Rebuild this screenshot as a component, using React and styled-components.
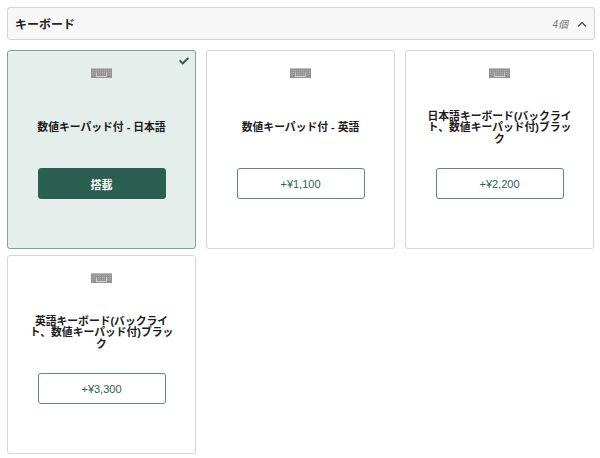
import React from 'react';
import styled, { createGlobalStyle } from 'styled-components';
import { FaCheck } from 'react-icons/fa';

const GlobalStyle = createGlobalStyle`
  html, body {
    margin: 0;
    background: #fff;
    font-family: "Liberation Sans", "Noto Sans CJK JP", sans-serif;
  }
`;

const Page = styled.div`
  width: 600px;
  height: 458px;
  box-sizing: border-box;
  padding: 7px 5px 0 7px;
  overflow: hidden;
`;

const Header = styled.div`
  height: 33px;
  box-sizing: border-box;
  display: flex;
  align-items: center;
  justify-content: space-between;
  padding: 0 6px 0 7px;
  background: #f7f7f7;
  border: 1px solid #d4d4d4;
  border-radius: 3px;
`;

const Title = styled.div`
  font-size: 12px;
  font-weight: 700;
  color: #222;
`;

const Summary = styled.div`
  display: flex;
  align-items: center;
  gap: 8px;
`;

const Count = styled.span`
  font-size: 10px;
  font-style: italic;
  color: #777;
`;

const Grid = styled.div`
  display: grid;
  grid-template-columns: repeat(3, 189px);
  grid-auto-rows: 199px;
  column-gap: 10px;
  row-gap: 6px;
  margin-top: 10px;
`;

const Card = styled.div`
  position: relative;
  box-sizing: border-box;
  display: flex;
  flex-direction: column;
  align-items: center;
  padding-top: 17px;
  border: 1px solid ${(p) => (p.$selected ? '#7fa398' : '#d6d6d6')};
  border-radius: 3px;
  background: ${(p) => (p.$selected ? '#e4eeea' : '#fff')};
`;

const Tick = styled.div`
  position: absolute;
  top: 5px;
  right: 6px;
  display: flex;
  color: #2b5f4f;
  font-size: 10px;
`;

const Name = styled.div`
  height: 36px;
  width: 150px;
  margin-top: 32px;
  display: flex;
  align-items: center;
  justify-content: center;
  text-align: center;
  font-size: 10.8px;
  font-weight: 700;
  line-height: 11.5px;
  color: #1c1c1c;
`;

const Action = styled.button`
  width: 128px;
  height: 31px;
  margin-top: 22px;
  padding: 0;
  box-sizing: border-box;
  font-family: inherit;
  font-size: 11px;
  font-weight: ${(p) => (p.$selected ? 700 : 400)};
  color: ${(p) => (p.$selected ? '#fff' : '#2b6350')};
  background: ${(p) => (p.$selected ? '#2b5f4f' : '#fff')};
  border: 1px solid ${(p) => (p.$selected ? '#2b5f4f' : '#5c8a7b')};
  border-radius: 3px;
`;

const KeyboardIcon = () => (
  <svg width="21" height="10" viewBox="0 0 21 10" style={{ display: 'block' }}>
    <rect width="21" height="10" fill="#949494" />
    <path d="M0 .5h21" stroke="#bcbcbc" strokeWidth="1" />
    <path d="M1 2.5h19M1 4.5h19M1 6.5h19" stroke="#b0b0b0" strokeWidth="1" strokeDasharray="1 1" />
    <path d="M6 8.5h9" stroke="#d4d4d4" strokeWidth="1" />
    <path d="M5.5 5v4M15.5 5v4" stroke="#c8c8c8" strokeWidth="1" />
  </svg>
);

const ChevronUp = () => (
  <svg width="12" height="8" viewBox="0 0 12 8" style={{ display: 'block' }}>
    <path d="M2 6.5l4-4 4 4" fill="none" stroke="#444" strokeWidth="1.2" />
  </svg>
);

const options = [
  { name: '数値キーパッド付 - 日本語', label: '搭載', selected: true },
  { name: '数値キーパッド付 - 英語', label: '+¥1,100' },
  { name: '日本語キーボード(バックライト、数値キーパッド付)ブラック', label: '+¥2,200' },
  { name: '英語キーボード(バックライト、数値キーパッド付)ブラック', label: '+¥3,300' },
];

const App = () => (
  <Page>
    <GlobalStyle />
    <Header>
      <Title>キーボード</Title>
      <Summary>
        <Count>4個</Count>
        <ChevronUp />
      </Summary>
    </Header>
    <Grid>
      {options.map((o) => (
        <Card key={o.name} $selected={o.selected}>
          {o.selected && (
            <Tick>
              <FaCheck />
            </Tick>
          )}
          <KeyboardIcon />
          <Name>{o.name}</Name>
          <Action $selected={o.selected}>{o.label}</Action>
        </Card>
      ))}
    </Grid>
  </Page>
);

export default App;
